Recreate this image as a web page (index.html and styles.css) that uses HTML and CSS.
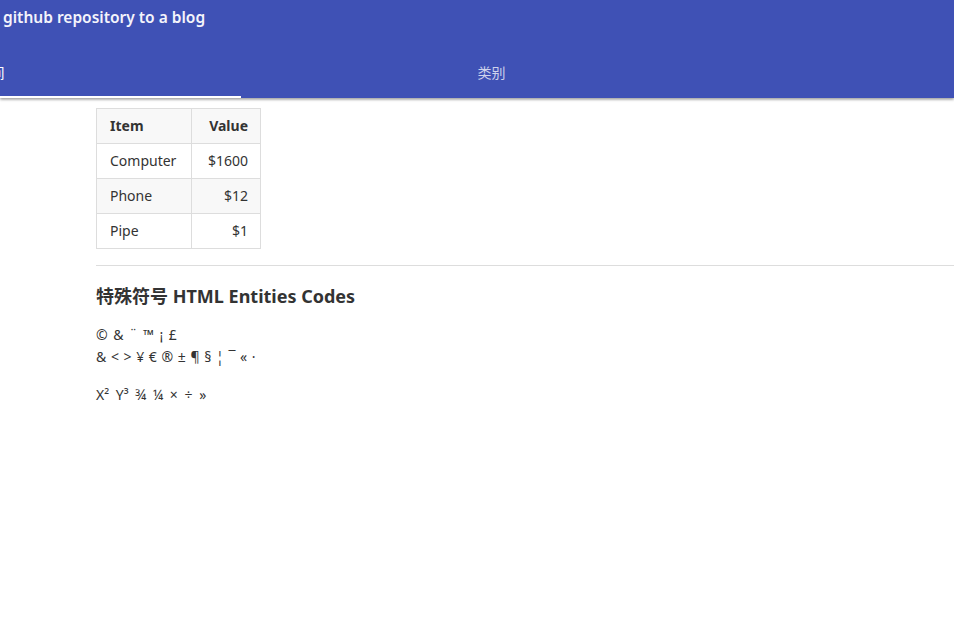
FILE: index.html
```html
<!DOCTYPE html>
<html lang="zh">
<head>
<meta charset="utf-8">
<title>github repository to a blog</title>
<link rel="stylesheet" href="styles.css">
</head>
<body>
<header class="appbar">
  <div class="toolbar"><h1 class="title">github repository to a blog</h1></div>
  <nav class="tabs">
    <a class="tab tab-first active">时间</a>
    <a class="tab">类别</a>
  </nav>
</header>
<main class="content">
  <table class="data">
    <thead>
      <tr><th class="col-item">Item</th><th class="num col-value">Value</th></tr>
    </thead>
    <tbody>
      <tr><td>Computer</td><td class="num">$1600</td></tr>
      <tr><td>Phone</td><td class="num">$12</td></tr>
      <tr><td>Pipe</td><td class="num">$1</td></tr>
    </tbody>
  </table>
  <hr class="rule">
  <h2 class="heading">特殊符号 HTML Entities Codes</h2>
  <p class="para">&copy; &amp; &uml; &trade; &iexcl; &pound;<br><span class="tight">&amp; &lt; &gt; &yen; &euro; &reg; &plusmn; &para; &sect; &brvbar; &macr; &laquo; &middot;</span></p>
  <p class="para wide">X&sup2; Y&sup3; &frac34; &frac14; &times; &divide; &raquo;</p>
</main>
</body>
</html>
```

FILE: styles.css
```css
html, body {
  margin: 0;
  padding: 0;
  background: #fff;
  overflow: hidden;
}
body {
  font-family: "Noto Sans", "Noto Sans CJK SC", sans-serif;
  font-size: 14px;
  color: #333;
}
.appbar {
  background: #3f51b5;
  color: #fff;
  box-shadow: 0 1px 3px rgba(0,0,0,0.35), 0 2px 2px rgba(0,0,0,0.12);
  position: relative;
  z-index: 1;
}
.toolbar {
  height: 48px;
  display: flex;
  align-items: flex-start;
  padding-left: 3px;
}
.title {
  margin: 0;
  padding-top: 6px;
  font-family: "Noto Sans", "Noto Sans CJK SC", sans-serif;
  font-weight: 600;
  font-size: 15.5px;
  line-height: 22px;
  color: #f4f4fb;
}
.tabs {
  display: flex;
  height: 50px;
  white-space: nowrap;
}
.tab {
  flex: 0 0 501px;
  display: flex;
  align-items: center;
  justify-content: center;
  font-family: "Noto Sans CJK SC", sans-serif;
  font-size: 14px;
  color: rgba(255,255,255,0.75);
  padding-bottom: 2px;
  box-sizing: border-box;
}
.tab-first {
  margin-left: -260px;
}
.tab.active {
  color: #fff;
  border-bottom: 2px solid #fff;
  padding-bottom: 0;
}
.content {
  margin-left: 96px;
  padding-top: 10px;
  width: 1200px;
}
.data {
  border-collapse: collapse;
  line-height: 20px;
}
.data th, .data td {
  border: 1px solid #ddd;
  padding: 7px 12px 7px 13px;
  text-align: left;
}
.data th { font-weight: 700; }
.data thead tr, .data tbody tr:nth-child(even) {
  background: #f8f8f8;
}
.data .col-item { width: 69px; }
.data .col-value { width: 43px; }
.data .num { text-align: right; }
.rule {
  border: 0;
  border-top: 1px solid #ddd;
  margin: 16px 0 0;
}
.heading {
  margin: 18px 0 0;
  font-size: 18px;
  line-height: 24px;
  font-weight: 700;
  color: #333;
}
.para {
  margin: 16px 0 0;
  line-height: 22px;
  word-spacing: 2px;
}
.para .tight { word-spacing: 1px; }
.para.wide { word-spacing: 3px; }
```
